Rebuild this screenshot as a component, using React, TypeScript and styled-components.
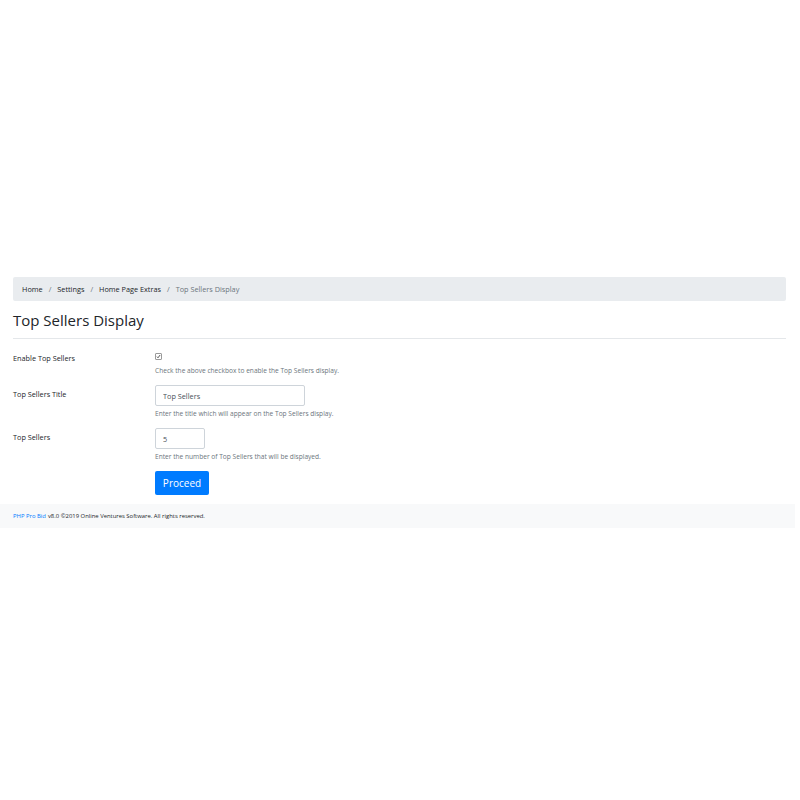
import React from 'react';
import styled, { createGlobalStyle } from 'styled-components';

const GlobalStyle = createGlobalStyle`
	html, body {
		margin: 0;
		padding: 0;
		background: #ffffff;
		font-family: 'Open Sans', 'Noto Sans', sans-serif;
		color: #212529;
	}
`;

const checkSvg =
	"data:image/svg+xml;utf8,<svg xmlns='http://www.w3.org/2000/svg' viewBox='0 0 8 8'><path d='M1.5 4.2 L3.2 6 L6.6 1.6' fill='none' stroke='%23222' stroke-width='1.2'/></svg>";

const Page = styled.div`
	width: 800px;
	height: 800px;
	padding-top: 277px;
	box-sizing: border-box;
`;

const Container = styled.div`
	width: 773px;
	margin-left: 13px;
`;

const Breadcrumb = styled.ol`
	display: flex;
	align-items: center;
	list-style: none;
	margin: 0;
	height: 24px;
	padding: 0 9px;
	background-color: #e9ecef;
	border-radius: 2px;
	font-size: 7.3px;
`;

const Crumb = styled.li<{ $active?: boolean }>`
	color: ${(p) => (p.$active ? '#6c757d' : '#212529')};

	&:not(:first-child)::before {
		content: '/';
		color: #6c757d;
		padding: 0 6px;
	}
`;

const Title = styled.h1`
	margin: 0;
	padding: 10px 0 8px;
	font-size: 15px;
	font-weight: 400;
	line-height: 19px;
	border-bottom: 1px solid #e4e7ea;
`;

const Form = styled.form`
	display: flex;
	flex-direction: column;
	gap: 9px;
	padding-top: 13px;
`;

const Row = styled.div`
	display: grid;
	grid-template-columns: 142px 1fr;
`;

const Label = styled.label<{ $forInput?: boolean }>`
	font-size: 7.3px;
	line-height: 11px;
	padding-top: ${(p) => (p.$forInput ? 4 : 1)}px;
`;

const Field = styled.div`
	display: flex;
	flex-direction: column;
	align-items: flex-start;
`;

const Check = styled.input`
	appearance: none;
	width: 7px;
	height: 7px;
	margin: 1px 0 3px;
	border: 1px solid #9a9a9a;
	border-radius: 1px;
	background: #ffffff url("${checkSvg}") center / 100% 100% no-repeat;
`;

const TextInput = styled.input<{ $w: number }>`
	width: ${(p) => p.$w}px;
	height: 21px;
	box-sizing: border-box;
	border: 1px solid #ced4da;
	border-radius: 2px;
	padding: 0 7px;
	font-family: inherit;
	font-size: 7.3px;
	color: #495057;
	outline: none;
`;

const Help = styled.small`
	display: block;
	font-size: 6.6px;
	line-height: 10px;
	color: #6c757d;
	margin-top: 3px;
`;

const Button = styled.button`
	width: 54px;
	height: 24px;
	border: none;
	border-radius: 2px;
	background-color: #007bff;
	color: #ffffff;
	font-family: inherit;
	font-size: 10px;
`;

const Footer = styled.footer`
	width: 795px;
	height: 24px;
	margin-top: 9px;
	display: flex;
	align-items: center;
	padding-left: 13px;
	box-sizing: border-box;
	background-color: #f8f9fa;
	font-size: 5.9px;
`;

const FooterLink = styled.a`
	color: #007bff;
	text-decoration: none;
	margin-right: 2px;
`;

export default function App() {
	return (
		<>
			<GlobalStyle />
			<Page>
				<Container>
					<Breadcrumb>
						<Crumb>Home</Crumb>
						<Crumb>Settings</Crumb>
						<Crumb>Home Page Extras</Crumb>
						<Crumb $active>Top Sellers Display</Crumb>
					</Breadcrumb>
					<Title>Top Sellers Display</Title>
					<Form onSubmit={(e) => e.preventDefault()}>
						<Row>
							<Label>Enable Top Sellers</Label>
							<Field>
								<Check type="checkbox" defaultChecked />
								<Help>Check the above checkbox to enable the Top Sellers display.</Help>
							</Field>
						</Row>
						<Row>
							<Label $forInput>Top Sellers Title</Label>
							<Field>
								<TextInput $w={150} defaultValue="Top Sellers" />
								<Help>Enter the title which will appear on the Top Sellers display.</Help>
							</Field>
						</Row>
						<Row>
							<Label $forInput>Top Sellers</Label>
							<Field>
								<TextInput $w={50} defaultValue="5" />
								<Help>Enter the number of Top Sellers that will be displayed.</Help>
							</Field>
						</Row>
						<Row>
							<span />
							<Field>
								<Button type="submit">Proceed</Button>
							</Field>
						</Row>
					</Form>
				</Container>
				<Footer>
					<FooterLink href="#">PHP Pro Bid</FooterLink>
					v8.0 ©2019 Online Ventures Software. All rights reserved.
				</Footer>
			</Page>
		</>
	);
}
